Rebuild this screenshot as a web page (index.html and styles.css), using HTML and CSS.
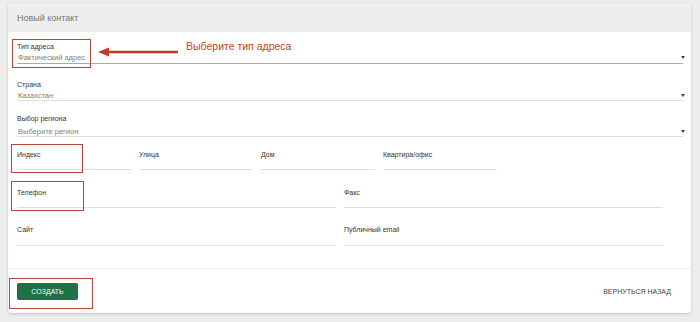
FILE: index.html
```html
<!DOCTYPE html>
<html>
	<head>
		<meta charset="utf-8">
		<title>Новый контакт</title>
		<link rel="stylesheet" href="styles.css">
	</head>
	<body>
		<div class="card">
			<div class="card_header">Новый контакт</div>

			<div class="card_body">
				<!--Тип адреса, with the hint drawn over it-->
				<div class="field field_first">
					<div class="label">Тип адреса</div>
					<div class="select select_dark">
						<span>Фактический адрес</span>
						<span class="caret"></span>
					</div>
					<div class="mark mark_type"></div>
					<svg class="hint_arrow" width="82" height="10" viewBox="0 0 82 10">
						<line x1="8" y1="5" x2="80" y2="5" stroke="#c0392b" stroke-width="2.5"/>
						<polygon points="0,5 11,0.5 11,9.5" fill="#c0392b"/>
					</svg>
					<div class="hint_text">Выберите тип адреса</div>
				</div>

				<div class="field field_country">
					<div class="label">Страна</div>
					<div class="select">
						<span>Казахстан</span>
						<span class="caret"></span>
					</div>
				</div>

				<div class="field field_region">
					<div class="label">Выбор региона</div>
					<div class="select select_low">
						<span>Выберите регион</span>
						<span class="caret"></span>
					</div>
				</div>

				<div class="row row_address">
					<div class="field">
						<div class="label">Индекс</div>
						<div class="input"></div>
						<div class="mark mark_index"></div>
					</div>
					<div class="field">
						<div class="label">Улица</div>
						<div class="input"></div>
					</div>
					<div class="field">
						<div class="label">Дом</div>
						<div class="input"></div>
					</div>
					<div class="field">
						<div class="label">Квартира/офис</div>
						<div class="input"></div>
					</div>
				</div>

				<div class="row row_half row_phone">
					<div class="field">
						<div class="label">Телефон</div>
						<div class="input"></div>
						<div class="mark mark_phone"></div>
					</div>
					<div class="field">
						<div class="label">Факс</div>
						<div class="input"></div>
					</div>
				</div>

				<div class="row row_half row_site">
					<div class="field">
						<div class="label">Сайт</div>
						<div class="input input_tall"></div>
					</div>
					<div class="field">
						<div class="label">Публичный email</div>
						<div class="input input_tall"></div>
					</div>
				</div>
			</div>

			<div class="card_footer">
				<div class="btn_wrap">
					<button class="btn_create">СОЗДАТЬ</button>
					<div class="mark mark_button"></div>
				</div>
				<a class="back_link" href="#">ВЕРНУТЬСЯ НАЗАД</a>
			</div>
		</div>
	</body>
</html>
```

FILE: styles.css
```css
*{
	margin:0;
	padding:0;
	box-sizing:border-box;
}

body{
	font-family:"Liberation Sans", Arial, sans-serif;
	background-color:#eceeec;
	padding:3px 9px 9px 8px;
}

.card{
	width:683px;
	height:310px;
	background-color:#FFF;
	border-radius:4px;
	box-shadow:0 1px 3px rgba(0,0,0,0.18);
	display:flex;
	flex-direction:column;
	overflow:hidden;
}

.card_header{
	height:29px;
	line-height:30px;
	padding-left:9px;
	background-color:#eeeeee;
	color:#777;
	font-size:9px;
}

.card_body{
	padding:0 8px 22px 9px;
	border-bottom:1px solid #f0f0f0;
}

.field{
	position:relative;
}

.label{
	font-size:7px;
	line-height:9px;
	color:#333;
}

.select{
	display:flex;
	justify-content:space-between;
	align-items:center;
	height:11px;
	margin-top:1px;
	font-size:7.5px;
	color:#808080;
	border-bottom:1px solid #ddd;
	padding-left:1px;
}

.select_dark{
	border-bottom:1px solid #aaa;
	height:12px;
}

.select_low{
	margin-top:3px;
}

.caret{
	width:0;
	height:0;
	margin-right:-2px;
	border-left:2px solid transparent;
	border-right:2px solid transparent;
	border-top:3px solid #444;
}

.field_first{
	margin-top:10px;
}

.field_country{
	margin-top:16px;
}

.field_region{
	margin-top:13px;
}

.row{
	display:grid;
	grid-template-columns:114px 114px 114px 114px;
	column-gap:8px;
}

.row_half{
	grid-template-columns:319px 319px;
}

.row_address{
	margin-top:13px;
}

.row_phone{
	margin-top:18px;
}

.row_site{
	margin-top:17px;
}

.input{
	height:11px;
	border-bottom:1px solid #ddd;
}

.input_tall{
	height:12px;
}

/* red annotation boxes laid over the form */
.mark{
	position:absolute;
	border:1px solid #b5443a;
}

.mark_type{
	left:-5px;
	top:-3px;
	width:79px;
	height:29px;
}

.mark_index{
	left:-6px;
	top:-6px;
	width:72px;
	height:29px;
}

.mark_phone{
	left:-6px;
	top:-7px;
	width:73px;
	height:30px;
}

.mark_button{
	left:-8px;
	top:-5px;
	width:84px;
	height:31px;
}

.hint_arrow{
	position:absolute;
	left:81px;
	top:5px;
}

.hint_text{
	position:absolute;
	left:169px;
	top:-2px;
	font-size:10.5px;
	color:#c0442a;
	white-space:nowrap;
}

.card_footer{
	display:flex;
	justify-content:space-between;
	align-items:center;
	padding:14px 20px 0 9px;
}

.btn_wrap{
	position:relative;
}

.btn_create{
	width:61px;
	height:17px;
	border:none;
	border-radius:2px;
	background-color:#1e7246;
	color:#FFF;
	font-family:"Liberation Sans", Arial, sans-serif;
	font-size:7px;
	display:block;
}

.back_link{
	font-size:7px;
	color:#444;
	text-decoration:none;
}
```
